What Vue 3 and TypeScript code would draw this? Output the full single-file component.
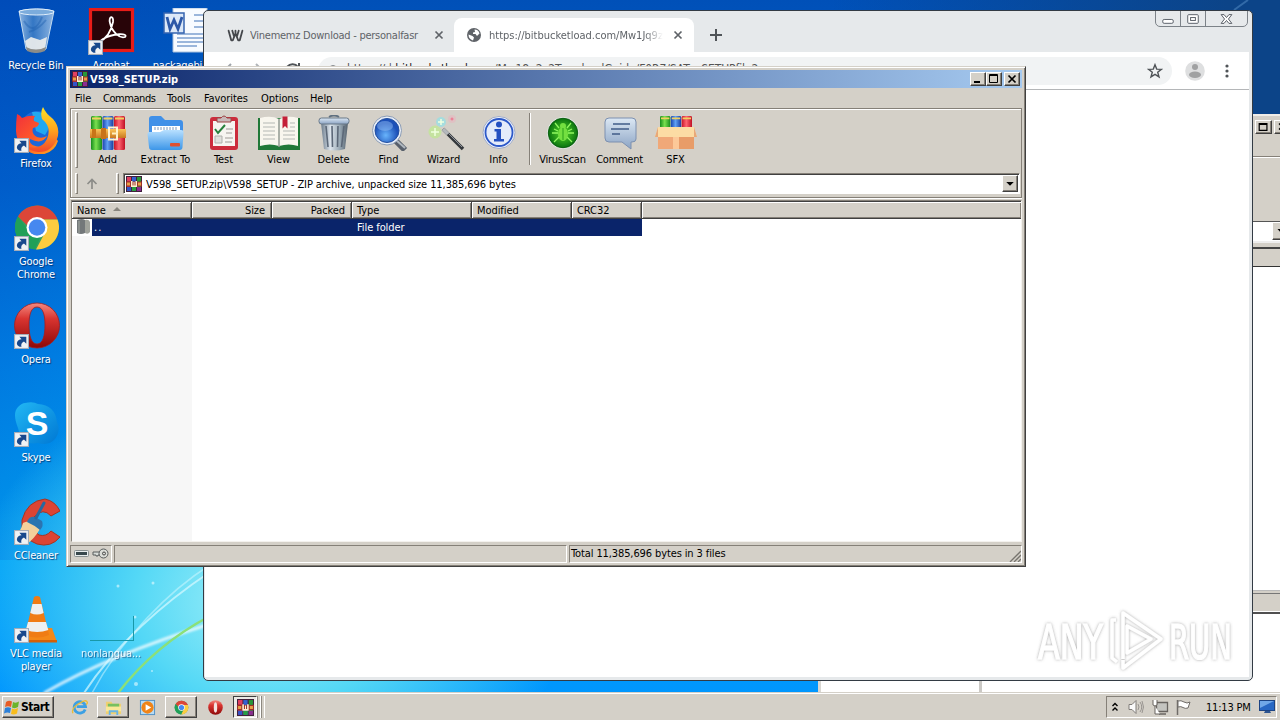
<script setup lang="ts">
interface Shortcut { icon: string; label: string; linked: boolean }
interface Tool { icon: string; label: string; width: string }

const columnOne: Shortcut[] = [
  { icon: 'bin', label: 'Recycle Bin', linked: false },
  { icon: 'firefox', label: 'Firefox', linked: true },
  { icon: 'chrome', label: 'Google Chrome', linked: true },
  { icon: 'opera', label: 'Opera', linked: true },
  { icon: 'skype', label: 'Skype', linked: true },
  { icon: 'ccleaner', label: 'CCleaner', linked: true },
  { icon: 'vlc', label: 'VLC media player', linked: true },
]
const menus: string[] = ['File', 'Commands', 'Tools', 'Favorites', 'Options', 'Help']
const tools: Tool[] = [
  { icon: 'add', label: 'Add', width: 'w55' },
  { icon: 'extract', label: 'Extract To', width: 'w61' },
  { icon: 'test', label: 'Test', width: 'w55' },
  { icon: 'view', label: 'View', width: 'w55' },
  { icon: 'delete', label: 'Delete', width: 'w55' },
  { icon: 'find', label: 'Find', width: 'w55' },
  { icon: 'wizard', label: 'Wizard', width: 'w55' },
  { icon: 'info', label: 'Info', width: 'w55' },
]
const extras: Tool[] = [
  { icon: 'virus', label: 'VirusScan', width: 'w57' },
  { icon: 'comment', label: 'Comment', width: 'w57' },
  { icon: 'sfx', label: 'SFX', width: 'w55' },
]
</script>

<template>
  <div class="desktop">
    <svg class="defs" width="0" height="0">
      <defs>
        <linearGradient id="gOrange" x1="0" y1="0" x2="0" y2="1"><stop offset="0" stop-color="#ffe226" /><stop offset=".5" stop-color="#ffa61c" /><stop offset="1" stop-color="#f4482c" /></linearGradient>
        <linearGradient id="gFox" x1="0" y1="0" x2="1" y2="1"><stop offset="0" stop-color="#f0303c" /><stop offset=".5" stop-color="#ff5a28" /><stop offset="1" stop-color="#ffb01c" /></linearGradient>
        <linearGradient id="gOpera" x1="0" y1="0" x2="0" y2="1"><stop offset="0" stop-color="#f48a80" /><stop offset=".35" stop-color="#d93430" /><stop offset="1" stop-color="#8c0808" /></linearGradient>
        <linearGradient id="gSky" x1="0" y1="0" x2="1" y2="1"><stop offset="0" stop-color="#22b8f4" /><stop offset="1" stop-color="#0078d4" /></linearGradient>
        <linearGradient id="gBin" x1="0" y1="0" x2="1" y2="0"><stop offset="0" stop-color="#a8c8e8" stop-opacity=".85" /><stop offset=".4" stop-color="#4a88c8" stop-opacity=".7" /><stop offset="1" stop-color="#b4d0ec" stop-opacity=".8" /></linearGradient>
        <linearGradient id="gFolder" x1="0" y1="0" x2="0" y2="1"><stop offset="0" stop-color="#b8e0ff" /><stop offset="1" stop-color="#3c96e8" /></linearGradient>
        <linearGradient id="gMetal" x1="0" y1="0" x2="1" y2="0"><stop offset="0" stop-color="#6c7c8c" /><stop offset=".35" stop-color="#dce4ec" /><stop offset=".7" stop-color="#98a8b4" /><stop offset="1" stop-color="#54606c" /></linearGradient>
        <linearGradient id="gSteel" x1="0" y1="0" x2="0" y2="1"><stop offset="0" stop-color="#dce8f4" /><stop offset="1" stop-color="#8ca4c4" /></linearGradient>
        <linearGradient id="gGreen" x1="0" y1="0" x2="1" y2="0"><stop offset="0" stop-color="#168c1c" /><stop offset=".45" stop-color="#7ae050" /><stop offset="1" stop-color="#168c1c" /></linearGradient>
        <linearGradient id="gBlue" x1="0" y1="0" x2="1" y2="0"><stop offset="0" stop-color="#1a44b0" /><stop offset=".45" stop-color="#60a0f4" /><stop offset="1" stop-color="#1a3ca0" /></linearGradient>
        <linearGradient id="gRed" x1="0" y1="0" x2="1" y2="0"><stop offset="0" stop-color="#c81428" /><stop offset=".45" stop-color="#ff6470" /><stop offset="1" stop-color="#c01024" /></linearGradient>
        <linearGradient id="gBelt" x1="0" y1="0" x2="0" y2="1"><stop offset="0" stop-color="#fcc458" /><stop offset="1" stop-color="#c87820" /></linearGradient>
        <radialGradient id="gLens" cx=".45" cy=".7"><stop offset="0" stop-color="#68b4fc" /><stop offset="1" stop-color="#1c50b8" /></radialGradient>
        <radialGradient id="gVirus"><stop offset="0" stop-color="#58d828" /><stop offset="1" stop-color="#0a7410" /></radialGradient>
        <symbol id="rar" viewBox="0 0 16 16">
          <rect width="16" height="16" fill="#40203c" />
          <path d="M1 1h4v14H1z" fill="#c82840" /><path d="M6 1h4v14H6z" fill="#3460d0" /><path d="M11 1h4v14h-4z" fill="#289838" />
          <path d="M1 1h4v4H1z" fill="#e04060" /><path d="M1 11h4v4H1z" fill="#3454c8" /><path d="M6 11h4v4H6z" fill="#28a040" /><path d="M11 11h4v4h-4z" fill="#8c2c90" />
          <path d="M0 5.5h16v5H0z" fill="#9c3028" /><path d="M1 6.5h3v3H1zM12 6.5h3v3h-3z" fill="#e8a048" />
          <path d="M5 5h1.5v4.5h1V6h1v3.500h1V5H11v6H5z" fill="#fff0d0" />
        </symbol>
        <symbol id="arrow" viewBox="0 0 14 14">
          <rect x=".5" y=".5" width="13" height="13" fill="#f0f2f4" stroke="#a4acb8" />
          <path d="M5 2.500h6.500V9L9.300 7C7 8 6.300 10 7 12 4.500 12 2.500 10.500 2.700 8.300 3 6 5 5 7 4.800z" fill="#18488c" />
        </symbol>
        <symbol id="chromeball" viewBox="0 0 48 48">
          <circle cx="24" cy="24" r="22" fill="#34a060" />
          <path d="M5 13A22 22 0 0 1 44.500 16H24a9 9 0 0 0-8.700 7z" fill="#dc4638" />
          <path d="M44.500 16A22 22 0 0 1 23 46l9-17a9 9 0 0 0-4-13z" fill="#fccc40" />
          <path d="M5 13l11 15a9 9 0 0 0 12 4l-6 14A22 22 0 0 1 5 13z" fill="#20a058" />
          <circle cx="24" cy="24" r="10.500" fill="#fff" /><circle cx="24" cy="24" r="8.300" fill="#4688f0" />
        </symbol>
        <symbol id="books" viewBox="0 0 34 34">
          <rect x="0" y="0" width="11" height="34" rx="1.500" fill="url(#gGreen)" />
          <rect x="11.500" y="0" width="11" height="34" rx="1.500" fill="url(#gBlue)" />
          <rect x="23" y="0" width="11" height="34" rx="1.500" fill="url(#gRed)" />
          <path d="M1 2.500h9M12.500 2.500h9M24 2.500h9" stroke="#f0d060" stroke-width="2" />
        </symbol>
      </defs>
    </svg>

    <svg class="wall" width="1280" height="693" viewBox="0 0 1280 693">
      <defs>
        <filter id="soft"><feGaussianBlur stdDeviation="1" /></filter>
      </defs>
      <g fill="none">
        <path d="M44 693Q110 655 210 624" stroke="#fff" stroke-width="3" opacity=".75" filter="url(#soft)" />
        <path d="M84 693C115 645 165 602 210 572" stroke="#d8faff" stroke-width="2" opacity=".7" />
        <path d="M92 693C120 640 170 590 210 565" stroke="#d8faff" stroke-width="1.500" opacity=".5" />
        <path d="M118 693Q155 645 210 616" stroke="#8ce078" stroke-width="2.500" />
      </g>
      <g fill="#e8fcff" opacity=".6"><circle cx="118" cy="586" r="1.500" /><circle cx="153" cy="583" r="1.500" /><circle cx="135" cy="617" r="1.500" /><circle cx="136" cy="684" r="2" /><circle cx="152" cy="671" r="1" /></g>
      <path d="M1234 10l14-10" stroke="#5890c8" stroke-width="2" opacity=".5" />
    </svg>

    <div class="shortcuts">
      <div v-for="s in columnOne" :key="s.label" class="shortcut">
        <div class="pic">
          <svg v-if="s.icon === 'bin'" viewBox="0 0 48 48">
            <path d="M7 3l7 38q10 6 20 0l8-38q-17-4-35 0z" fill="url(#gBin)" stroke="#c4dcf0" />
            <ellipse cx="24.500" cy="4" rx="17.500" ry="3" fill="#7cacdc" stroke="#e0eefa" />
            <path d="M13 33l6-4 9 3 7-3-2 12q-9 4-18 0z" fill="#f0f0ec" opacity=".9" />
            <path d="M14 39q10 5 20 0l-1 4q-9 4-18 0z" fill="#8c8c88" />
            <path d="M12 13q10 16 18-4M17 24q10-3 17-12" fill="none" stroke="#1c5cac" stroke-width="2" opacity=".4" />
          </svg>
          <svg v-else-if="s.icon === 'firefox'" viewBox="0 0 48 48">
            <circle cx="26" cy="23" r="18" fill="#1c68d8" /><path d="M20 6q12-2 16 7 3 8-3 16l-9-4z" fill="#20a8f0" />
            <path d="M5 8q3 1 5 4 7-3 13-2-2 3-1 5l5 2q0 4-6 5-2 6 4 9 5 2 10-1-5 9-17 3-2 7 11 8 13-5 12-12l5 6q-4 13-20 14Q5 44 4 25q0-10 1-17z" fill="url(#gFox)" />
            <path d="M31 1q3 7 10 12 8 9 4 20-6 14-19 13-9-1-12-6 15 5 21-7 5-12-5-20-2-7 1-12z" fill="url(#gOrange)" />
          </svg>
          <svg v-else-if="s.icon === 'chrome'" viewBox="0 0 48 48"><use href="#chromeball" x="1" y="-.5" /></svg>
          <svg v-else-if="s.icon === 'opera'" viewBox="0 0 48 48">
            <path fill-rule="evenodd" d="M25 1a22 22 0 1 1 0 45 22 22 0 0 1 0-45zm0 4c-6 0-8 8-8 18s2 19 8 19 8-9 8-19-2-18-8-18z" fill="url(#gOpera)" stroke="#a81c1c" stroke-width=".8" />
          </svg>
          <svg v-else-if="s.icon === 'skype'" viewBox="0 0 48 48">
            <path d="M13 3q8-2 13 1 17 1 19 18 4 9-2 17-6 7-17 4Q10 46 6 28 0 13 6 7q4-4 7-4z" fill="url(#gSky)" />
            <text x="25" y="35" class="skype-s">S</text>
          </svg>
          <svg v-else-if="s.icon === 'ccleaner'" viewBox="0 0 48 48">
            <path d="M48 13l-9 5Q31 9 22 19q-5 12 5 18 7 2 12-4l9 6q-9 11-23 7Q8 40 10 22 15 3 33 1q10 2 15 12z" fill="#dc4434" stroke="#a83420" />
            <path d="M11 25q8-5 17 6-6 10-13 15L2 40q7-7 9-15z" fill="#f4d09c" />
            <path d="M15 24q2-6 8-5l7 4q2 5-2 9-6-5-13-8z" fill="#2c74b0" /><path d="M24 20l8-15" stroke="#2868a0" stroke-width="3" stroke-linecap="round" />
          </svg>
          <svg v-else viewBox="0 0 48 48">
            <path d="M10 32h30l5 14H8z" fill="#f48818" /><path d="M8 44h37v2.500H8z" fill="#d46008" />
            <path d="M22 1q3-2 6 0l9 38q-12 5-24 0z" fill="#f07c14" />
            <path d="M20.400 8h9.200l2 9q-6.500 3-13.300 0zM16 26h18l2.300 8q-11 4-22.500 0z" fill="#eef0f0" />
          </svg>
          <svg v-if="s.linked" class="link" viewBox="0 0 14 14"><use href="#arrow" /></svg>
        </div>
        <div class="caption">{{ s.label }}</div>
      </div>
    </div>

    <div class="shortcuts second">
      <div class="shortcut">
        <div class="pic">
          <svg viewBox="0 0 48 48"><rect x="3.500" y="1.500" width="42" height="41" fill="#280408" stroke="#e81c18" stroke-width="3.200" />
            <path d="M12 34q11-5 14-20c1-7-5-6-3 1 2 9 10 16 15 14 4-4-12-4-22 2-7 5-5 7-2 3z" fill="none" stroke="#fff" stroke-width="1.800" /></svg>
          <svg class="link acro" viewBox="0 0 14 14"><use href="#arrow" /></svg>
        </div>
        <div class="caption">Acrobat</div>
      </div>
      <div class="shortcut">
        <div class="pic">
          <svg viewBox="0 0 48 48"><path d="M12 0h34v44H12z" fill="#f8fbff" stroke="#a8c0dc" />
            <path d="M33 7h9M33 13h9M33 19h9M16 26h26M16 30h26M16 34h26M16 38h20" stroke="#7ca0d0" stroke-width="1.500" />
            <rect x="3" y="5" width="20" height="20" fill="#dce8f8" stroke="#3464b0" stroke-width="1.500" />
            <path d="M6 9l3 12 4-9 4 9 4-12" stroke="#2c58a8" stroke-width="2.800" fill="none" /></svg>
        </div>
        <div class="caption wide-caption">packagebin...</div>
      </div>
    </div>

    <div class="ghost">
      <div class="ghost-edge"></div>
      <div class="caption">nonlangua...</div>
    </div>

    <div class="lower-window"><span></span></div>

    <div class="back-window">
      <div class="bw-title"><i class="btn3"><svg viewBox="0 0 16 14"><path d="M3 3h9v8H3zM3 4h9" fill="none" stroke="#000" stroke-width="1.400" /></svg></i><i class="btn3"><svg viewBox="0 0 16 14"><path d="M4 3l7 7M11 3l-7 7" stroke="#000" stroke-width="1.700" /></svg></i></div>
      <div class="bw-menu"></div>
      <div class="bw-tools"></div>
      <div class="bw-addr"><i class="btn3"><svg viewBox="0 0 14 16"><path d="M4 6h7l-3.500 4z" /></svg></i></div>
      <div class="bw-head"></div>
      <div class="bw-body"></div>
      <div class="bw-status"></div>
    </div>

    <div class="browser">
      <div class="tabs">
        <div class="tab">
          <svg class="fav" viewBox="0 0 16 16"><path d="M1.500 3.500l2.500 9h1.500L8 6l2.500 6.500H12l2.500-9M5 3.500l1.500 5M8 5.500V3.500M11 3.500l-1.500 5" fill="none" stroke="#45484c" stroke-width="1.700" stroke-linejoin="round" stroke-linecap="round" /></svg>
          <span class="tab-title first">Vinememz Download - personalfasr</span>
          <svg class="x" viewBox="0 0 10 10"><path d="M1.500 1.500l7 7M8.500 1.500l-7 7" stroke="#5f6368" stroke-width="1.700" /></svg>
        </div>
        <div class="tab active">
          <svg class="fav" viewBox="0 0 16 16"><circle cx="8" cy="8" r="7" fill="#5f6368" /><path d="M2.500 7.500l4 1.500 1.500 1.500-1 3Q2.500 12 2.500 7.500zM8.500 2.500q4 0 5 4L11 9 9.500 7H7V5.500l2-.5z" fill="#fff" /></svg>
          <span class="tab-title second-title">https://bitbucketload.com/Mw1Jq9z</span>
          <svg class="x" viewBox="0 0 10 10"><path d="M1.500 1.500l7 7M8.500 1.500l-7 7" stroke="#5f6368" stroke-width="1.700" /></svg>
        </div>
        <svg class="plus" viewBox="0 0 14 14"><path d="M7 1v12M1 7h12" stroke="#505458" stroke-width="2" /></svg>
      </div>
      <div class="wbtns">
        <i><svg viewBox="0 0 25 16"><rect x="7" y="8.500" width="11" height="4" rx="1.500" /></svg></i>
        <i><svg viewBox="0 0 25 16"><rect x="7" y="3.500" width="11" height="9" rx="1" /><rect x="10" y="6.500" width="5" height="3" /></svg></i>
        <i class="wide"><svg viewBox="0 0 42 16"><path d="M15.500 3.500h3l2.500 3 2.500-3h3l-3.500 4.500 3.500 4.500h-3L21 9.500l-2.500 3h-3L19 8z" /></svg></i>
      </div>
      <div class="nav">
        <svg class="arrows" viewBox="0 0 110 32"><path d="M27 9l-7 7 7 7M20 16h14" stroke="#a0a5aa" fill="none" stroke-width="2" /><path d="M52 9l7 7-7 7M45 16h14" stroke="#b0b4b8" fill="none" stroke-width="2" /><path d="M94 12a7 7 0 1 0 1 7M95 8v5h-5" stroke="#505458" fill="none" stroke-width="2" /></svg>
        <div class="omni"><svg viewBox="0 0 14 14"><circle cx="7" cy="7" r="5" fill="none" stroke="#5f6368" stroke-width="1.400" /></svg><span>https:// | <b>bitbucketload.com</b>/Mw18q2z2TownloadGuide/F0R7/SAT-wSETUPfile2</span>
          <svg class="star" viewBox="0 0 16 16"><path d="M8 1.700l1.700 4.400 4.700.2-3.700 3 1.300 4.600-4-2.600-4 2.600 1.300-4.600-3.700-3 4.700-.2z" fill="none" stroke="#505458" stroke-width="1.400" /></svg></div>
        <svg class="avatar" viewBox="0 0 20 20"><circle cx="10" cy="10" r="9.800" fill="#dedfe0" /><circle cx="10" cy="6" r="3" fill="#a0a1a2" /><ellipse cx="10" cy="13.700" rx="6" ry="3.200" fill="#a0a1a2" /></svg>
        <svg class="dots" viewBox="0 0 4 14"><circle cx="2" cy="2" r="1.600" /><circle cx="2" cy="7" r="1.600" /><circle cx="2" cy="12" r="1.600" /></svg>
      </div>
      <div class="page"></div>
    </div>

    <div class="archiver">
      <div class="title">
        <svg class="rar" viewBox="0 0 16 16"><use href="#rar" /></svg><span>V598_SETUP.zip</span>
        <div class="title-btns">
          <i class="btn3"><svg viewBox="0 0 14 12"><path d="M3 9h6" stroke="#000" stroke-width="2" /></svg></i>
          <i class="btn3"><svg viewBox="0 0 14 12"><path d="M2.500 1.500h8v8h-8zM2.500 2.500h8" fill="none" stroke="#000" /></svg></i>
          <i class="btn3 gap"><svg viewBox="0 0 14 12"><path d="M3.500 2.500l7 7M10.500 2.500l-7 7" stroke="#000" stroke-width="1.700" /></svg></i>
        </div>
      </div>
      <div class="menu"><span v-for="m in menus" :key="m" :class="'m-' + m.toLowerCase()">{{ m }}</span></div>
      <div class="bars">
        <div class="tools">
          <i class="grip"></i>
          <div v-for="t in tools" :key="t.icon" class="tool" :class="t.width">
            <svg v-if="t.icon === 'add'" viewBox="0 0 42 36"><use href="#books" x="4" y="1" width="34" height="34" /><path d="M3 14h36v9H3z" fill="url(#gBelt)" /><path d="M5 14h4v9H5zM14 13h5v11h-5z" fill="#c87418" /><rect x="22" y="12.500" width="8" height="12" fill="none" stroke="#fff4d0" stroke-width="2" /><path d="M25 18.500h6" stroke="#fff0c0" stroke-width="2" /></svg>
            <svg v-else-if="t.icon === 'extract'" viewBox="0 0 42 36"><path d="M4 4q0-3 3-3h9l4 4h15q3 0 3 3v18H4z" fill="#4090e8" /><path d="M7 11h28v10H7z" fill="#fff" /><path d="M10 12v3M13 12v3M16 12v3M19 12v3M22 12v3M25 12v3M28 12v3M31 12v3" stroke="#7c98bc" /><path d="M2.500 19q0-2 2-2H15l4-2h17q3 0 2.500 3l-1 14q0 3-3 3H7q-3 0-3-3z" fill="url(#gFolder)" /><rect x="25" y="28" width="10" height="3.500" rx="1" fill="#e05030" /></svg>
            <svg v-else-if="t.icon === 'test'" viewBox="0 0 42 36"><rect x="7" y="2" width="28" height="33" rx="3" fill="#cc2c3c" /><path d="M10 6h22v25H10z" fill="#f6f4f0" /><path d="M14 3h4q3-4 6 0h4v4H14z" fill="#c8b8b8" stroke="#944" /><path d="M12 14l3 4 7-8" fill="none" stroke="#28803c" stroke-width="2" /><path d="M23 14h7M23 18h6M22 23h8M22 27h7" stroke="#bcb8b4" stroke-width="1.500" /><path d="M12 21h7v7h-7z" fill="#e0e0dc" stroke="#b0b0ac" /></svg>
            <svg v-else-if="t.icon === 'view'" viewBox="0 0 42 36"><path d="M0 3h42v32H0z" fill="#207838" /><path d="M2 3q11-3 19 1v27q-9-3-19 0zM40 3q-10-3-19 1v27q10-3 19 0z" fill="#f8f6ee" /><path d="M5 8h12M5 12h12M5 16h12M5 20h12M5 24h12M25 16h12M25 20h12M25 24h12M32 8h5M32 12h5" stroke="#b4b8b4" stroke-width="1.200" /><path d="M21 4v28" stroke="#909890" stroke-width="1.500" /><path d="M24.500 1.500h5v12L27 11l-2.500 2.500z" fill="#c42038" /></svg>
            <svg v-else-if="t.icon === 'delete'" viewBox="0 0 42 36"><path d="M16 2q5-3 10 0" fill="none" stroke="#607080" stroke-width="2" /><path d="M8 8h27l-3 26q-11 3-21 0z" fill="url(#gMetal)" /><path d="M13 11l2 21M19 11l.5 21M25 11l-.5 21M31 11l-2.500 21" stroke="#5c6878" stroke-width="1.600" /><rect x="6" y="3" width="30" height="6" rx="2.500" fill="url(#gSteel)" stroke="#687888" /></svg>
            <svg v-else-if="t.icon === 'find'" viewBox="0 0 42 36"><path d="M27 25l10 10" stroke="#58606c" stroke-width="6" /><path d="M28 25l9 8" stroke="#b0b8c0" stroke-width="2" /><circle cx="19" cy="15.500" r="14.500" fill="#e8eef8" stroke="#8c9cb4" /><circle cx="19" cy="15.500" r="12" fill="url(#gLens)" stroke="#2450a0" /><ellipse cx="17" cy="11" rx="8" ry="5" fill="#90bcf4" opacity=".5" /></svg>
            <svg v-else-if="t.icon === 'wizard'" viewBox="0 0 42 36"><circle cx="12" cy="17" r="6.500" fill="#b8f080" opacity=".55" /><circle cx="18" cy="7" r="5" fill="#80e8f0" opacity=".55" /><circle cx="29" cy="4" r="4" fill="#f8a0b8" opacity=".3" /><path d="M12 13v8M8 17h8M18 4v6M15 7h6" stroke="#f0ffe0" stroke-width="1.500" /><path d="M29 2.500v3M27.500 4h3" stroke="#f06c88" /><path d="M20 14l20 20" stroke="#34383c" stroke-width="3.500" /><path d="M20 14l5 5" stroke="#b4b8bc" stroke-width="3.500" /><path d="M25 18l14 14" stroke="#90949c" /></svg>
            <svg v-else viewBox="0 0 42 36"><circle cx="21" cy="17.500" r="16" fill="#eef2fc" stroke="#a0acc8" /><circle cx="21" cy="17.500" r="13.500" fill="#e4ebfa" stroke="#2c58c8" stroke-width="1.800" /><circle cx="21" cy="9.500" r="3" fill="#2450c0" /><path d="M16.500 14H23v10h3v2.500H16V24h2.500v-7.500h-2z" fill="#2450c0" /></svg>
            <span>{{ t.label }}</span>
          </div>
          <i class="divider"></i>
          <div v-for="t in extras" :key="t.icon" class="tool" :class="t.width">
            <svg v-if="t.icon === 'virus'" viewBox="0 0 42 36"><circle cx="21" cy="18" r="16" fill="#e0e4e0" /><circle cx="21" cy="18" r="14.700" fill="url(#gVirus)" stroke="#0c6010" /><g stroke="#90f860" stroke-width="1.300" fill="none"><path d="M13 8l4 5M29 8l-4 5M10 18h6M26 18h6M12 27l5-5M30 27l-5-5M12 14l4 2M30 14l-4 2" /></g><ellipse cx="21" cy="19" rx="5" ry="7" fill="#74e040" /><circle cx="21" cy="11" r="3" fill="#74e040" /><path d="M21 13v12" stroke="#28a018" /></svg>
            <svg v-else-if="t.icon === 'comment'" viewBox="0 0 42 36"><path d="M10 3h23q4 0 4 4v17q0 3-4 3h-1v7l-9-7H10q-4 0-4-4V7q0-4 4-4z" fill="url(#gSteel)" stroke="#7c90b0" /><path d="M14 9h17M12 14h18M13 19h8" stroke="#405c88" stroke-width="1.600" /></svg>
            <svg v-else viewBox="0 0 42 36"><use href="#books" x="5" y="1" width="32" height="32" /><path d="M3 13h36v21H3z" fill="#f0a878" /><path d="M21 22h18v12H21z" fill="#e89c68" /><path d="M3 12h36l3 10H0z" fill="#fcdca4" /><path d="M3 12L0 22h3zM39 12l3 10h-3z" fill="#e8a878" /><path d="M18 22h6v12h-6z" fill="#fcc898" /></svg>
            <span>{{ t.label }}</span>
          </div>
        </div>
        <div class="address">
          <i class="grip"></i>
          <svg class="up" viewBox="0 0 12 12"><path d="M6 11V1.500M1.500 6L6 1.500 10.500 6" fill="none" stroke="#8c8c88" stroke-width="1.700" /></svg>
          <i class="grip"></i>
          <div class="field"><svg class="rar" viewBox="0 0 16 16"><use href="#rar" /></svg><span>V598_SETUP.zip\V598_SETUP - ZIP archive, unpacked size 11,385,696 bytes</span><i class="btn3 drop"><svg viewBox="0 0 12 14"><path d="M2.500 5.500h7L6 9z" /></svg></i></div>
        </div>
      </div>
      <div class="list">
        <div class="row head">
          <span class="c120">Name <svg viewBox="0 0 8 4"><path d="M0 4l4-4 4 4z" fill="#88857e" /></svg></span><span class="c80 right">Size</span><span class="c80 right">Packed</span><span class="c120">Type</span><span class="c100">Modified</span><span class="c70">CRC32</span><span class="rest"></span>
        </div>
        <div class="entry">
          <svg viewBox="0 0 16 16"><path d="M1 1q5-2 8 0v13q-4 2-8 0z" fill="#73787a" /><path d="M9 1q4-1 5 2v10q-2 3-5 1z" fill="#a0a39c" /><path d="M3 2v12" stroke="#a4a8a0" /></svg>
          <div class="selected"><span class="dotdot">..</span><span class="kind">File folder</span></div>
        </div>
        <div class="name-col"></div>
      </div>
      <div class="status">
        <div class="cell s1"><svg viewBox="0 0 38 16"><rect x="2.500" y="4.500" width="14" height="6" rx="1" fill="#e8ecec" stroke="#889090" /><path d="M4 6h11v3H4z" fill="#38484c" /><path d="M21 6h7v3h-2v1h-2v-1h-3z" fill="#d8dcd8" stroke="#585c5c" /><circle cx="31.500" cy="7.500" r="4.500" fill="#dadcd8" stroke="#585c5c" /><circle cx="32" cy="7.500" r="1.500" fill="none" stroke="#444" /></svg></div>
        <div class="cell s2"></div>
        <div class="cell s3">Total 11,385,696 bytes in 3 files<svg viewBox="0 0 12 12"><path d="M1 12L12 1M5 12l7-7M9 12l3-3" stroke="#77746e" stroke-width="1.300" /></svg></div>
      </div>
    </div>

    <svg class="brand" viewBox="0 0 230 70">
      <defs><filter id="halo" x="-10%" y="-10%" width="120%" height="120%"><feDropShadow dx="0" dy="0" stdDeviation="1.700" flood-color="#666" flood-opacity=".6" /></filter></defs>
      <g filter="url(#halo)">
        <text x="8" y="54" textLength="65" lengthAdjust="spacingAndGlyphs">ANY</text>
        <text x="139" y="54" textLength="63" lengthAdjust="spacingAndGlyphs">RUN</text>
        <g fill="none" stroke="#fff" stroke-width="3.500" stroke-linejoin="round"><path d="M93 54V8l38 26-38 29v-8" /><path d="M97 21v27l24-14z" /><path d="M86 15h-4v38l5 4" /></g>
      </g>
    </svg>

    <div class="taskbar">
      <div class="start"><svg viewBox="0 0 16 16"><path d="M2 3q3-2 6-.5L7 8Q4 6.500 1 8z" fill="#e85c24" /><path d="M9 3q3 1.500 6-.5L14 8q-3 2-6 .5z" fill="#6cb42c" /><path d="M1 9q3-1.500 6 0l-1 5q-3-1-6 .5z" fill="#2c80d8" /><path d="M8 9.500q3 1.500 6-.5l-1 5.500Q10 16 7 15z" fill="#f8bc1c" /></svg><b>Start</b></div>
      <div class="quick">
        <span class="q ie"><svg viewBox="0 0 18 18"><path d="M15 11a6 6 0 1 1 .3-3H6" fill="none" stroke="#3ca0e4" stroke-width="3" /><path d="M2 15Q0 10 8 5t9-2q1 1-1 3" fill="none" stroke="#e8bc38" stroke-width="1.400" /></svg></span>
        <span class="q raised"><svg viewBox="0 0 18 18"><path d="M1 3h6l1 2h9v11H1z" fill="#f0d070" /><path d="M3 5h12v5H3z" fill="#78c060" /><path d="M1 8h16v5H1z" fill="#fae898" /><path d="M4 17v-5h10v5h-2v-3H6v3z" fill="#68b4e4" /></svg></span>
        <span class="q wmp"><svg viewBox="0 0 18 18"><rect x="1.500" y="1.500" width="15" height="15" fill="#b8dcf4" stroke="#5090c4" /><circle cx="9" cy="9" r="6.500" fill="#f08418" /><path d="M7 5.500l6 3.500-6 3.500z" fill="#fff" /></svg></span>
        <span class="q raised"><svg class="small" viewBox="0 0 48 48"><use href="#chromeball" /></svg></span>
        <span class="q op"><svg viewBox="0 0 18 18"><circle cx="9" cy="9" r="7.700" fill="url(#gOpera)" /><ellipse cx="9" cy="9" rx="1.800" ry="5.500" fill="#f4e4e0" /></svg></span>
        <span class="q pressed"><svg viewBox="0 0 16 16"><use href="#rar" /></svg></span><i class="stack"></i><i class="stack"></i>
      </div>
      <div class="tray">
        <svg class="chev" viewBox="0 0 8 10"><path d="M1.500 4L4 1.500 6.500 4M1.500 8.500L4 6l2.500 2.500" fill="none" stroke="#000" stroke-width="1.400" /></svg>
        <svg class="t1" viewBox="0 0 18 16"><path d="M2 5.500h3l4-4v13l-4-4H2z" fill="#fafafa" stroke="#807c78" /><path d="M11 5q2 3 0 6M13 3q3.500 5 0 10M15 2q3 6 0 12" fill="none" stroke="#989490" /></svg>
        <svg class="t1" viewBox="0 0 18 16"><path d="M5.500 3.500h11v9h-11zM8 15h7" fill="#c4c4c0" stroke="#686460" stroke-width="1.300" /><path d="M2 1v5q2 2 4 0V1M4 7v8h5" fill="#fff" stroke="#686460" /></svg>
        <svg class="t1" viewBox="0 0 18 16"><path d="M2.500 1v15" stroke="#706c68" stroke-width="1.500" /><path d="M3 2q3-1 6 1t6 0l-2 6q-3 1-5-.500T3 8z" fill="#fff" stroke="#706c68" /></svg>
        <span>11:13 PM</span>
        <svg class="monitor" viewBox="0 0 16 14"><rect x=".5" y=".5" width="15" height="10" fill="#2868c4" stroke="#1c4484" /><path d="M1 1h14L1 8z" fill="#70a8e8" /><path d="M6 11h5l1 2H5z" fill="#2c5490" /></svg>
      </div>
    </div>
  </div>
</template>

<style>
body { margin: 0; overflow: hidden; }
</style>

<style scoped>
* { box-sizing: border-box; }
.desktop { position: relative; width: 1280px; height: 720px; overflow: hidden; font: 11px/13px "DejaVu Sans Condensed", "DejaVu Sans", sans-serif; font-stretch: condensed; letter-spacing: -.08px; color: #000; white-space: nowrap;
  background: radial-gradient(ellipse 300px 230px at 270px 600px, #a8f2f8 0, #54d8f6 45%, rgba(30, 190, 248, 0) 100%), linear-gradient(90deg, rgba(0,60,190,.2) 0, rgba(0,160,255,0) 16%, transparent 65%, #0c4488 96%) 0 0 / 1280px 560px no-repeat, linear-gradient(180deg, #0050b8 0, #0064cc 25%, #0088e8 50%, #00a4f4 72%, #0094ff 100%); }
svg { display: block; flex: none; }
.defs, .wall { position: absolute; left: 0; top: 0; }
.shortcuts { position: absolute; left: 0; top: 8px; display: grid; grid-template-columns: 72px; grid-auto-rows: 98px; }
.shortcuts.second { left: 75px; grid-template-columns: 72px 72px; column-gap: 2px; }
.shortcut { display: flex; flex-direction: column; align-items: center; }
.pic { position: relative; width: 48px; height: 48px; }
.pic > svg { width: 48px; height: 48px; }
.pic > .link { position: absolute; width: 15px; height: 15px; left: 2px; bottom: 1px; }
.pic > .acro { left: 1px; }
.skype-s { font: bold 34px Arial, "Liberation Sans", sans-serif; fill: #fff; text-anchor: middle; }
.caption { margin-top: 3px; color: #fff; text-align: center; text-shadow: 1px 1px 1px rgba(0, 30, 80, .7); white-space: normal; width: 64px; letter-spacing: -.15px; }
.wide-caption { width: 72px; white-space: nowrap; }
.ghost { position: absolute; left: 79px; top: 616px; width: 64px; }
.ghost-edge { width: 44px; height: 25px; margin-left: 11px; border-right: 1px solid #1898a8; border-bottom: 1px solid #1898a8; }
.ghost .caption { margin-top: 6px; opacity: .85; }
.lower-window { position: absolute; left: 818px; top: 614px; width: 462px; height: 80px; background: #fff; border-left: 3px solid #d9d7d2; padding-left: 158px; }
.lower-window span { display: block; width: 3px; height: 78px; background: #cbc9c5; }
.back-window { position: absolute; left: 1200px; top: 114px; width: 120px; height: 500px; background: #d4d0c8; border-top: 2px solid #f0ede8; border-bottom: 2px solid #505050; display: flex; flex-direction: column; }
.bw-title { height: 40px; padding: 4px 0 0 55px; display: flex; gap: 2px; }
.bw-title .btn3 { width: 17px; height: 14px; }
.bw-menu { height: 1px; background: #858078; }
.bw-tools { height: 65px; border-top: 1px solid #fff; border-bottom: 1px solid #555; }
.bw-addr { height: 19px; background: #fff; padding-left: 72px; }
.bw-addr .btn3 { width: 17px; height: 18px; }
.bw-head { height: 26px; border-top: 2px solid #eee; border-bottom: 1px solid #333; background: linear-gradient(#d4d0c8 4px, #444 4px, #444 6px, #d4d0c8 6px); }
.bw-body { flex: 1; background: #fff; }
.bw-status { height: 22px; border-top: 1px solid #bbb; border-bottom: 1px solid #fff; background: linear-gradient(#d4d0c8 2px, #777 2px, #777 3px, #d4d0c8 3px); }
.btn3 { display: block; flex: none; background: #d4d0c8; border: 1px solid; border-color: #fff #404040 #404040 #fff; box-shadow: inset -1px -1px #858078; }
.btn3 svg { width: 100%; height: 100%; }

.browser { position: absolute; left: 203px; top: 10px; width: 1050px; height: 671px; background: #e6e9eb; border: 1px solid #333b44; border-radius: 5px; overflow: hidden; display: flex; flex-direction: column; }
.tabs { height: 41px; flex: none; display: flex; align-items: flex-end; padding-left: 10px; }
.tab { width: 240px; height: 34px; border-radius: 8px 8px 0 0; display: flex; align-items: center; padding-left: 13px; }
.tab.active { background: #fff; padding-left: 12px; }
.fav { width: 16px; height: 16px; }
.tab:first-child .fav { width: 17px; height: 17px; }
.tab-title { width: 174px; margin-left: 7px; color: #5f6368; font-size: 11px; overflow: hidden; height: 16px; line-height: 17px; }
.first { letter-spacing: -.25px; width: 177px; margin-left: 6px; }
.second-title { letter-spacing: 0; mask-image: linear-gradient(90deg, #000 155px, transparent 174px); }
.x { width: 10px; height: 10px; margin-left: 10px; }
.tab:first-child .x { margin-left: 7px; }
.plus { width: 14px; height: 14px; margin: 0 0 10px 15px; }
.wbtns { position: absolute; right: 4px; top: -1px; display: flex; border: 1px solid #7c8288; border-radius: 0 0 5px 5px; height: 17px; }
.wbtns i { width: 25px; border-right: 1px solid #7c8288; }
.wbtns .wide { width: 41px; border: 0; }
.wbtns svg { width: 100%; height: 16px; fill: #fff; stroke: #585e66; }
.nav { height: 38px; flex: none; margin-right: 3px; background: #fff; display: flex; align-items: center; border-bottom: 1px solid #b4b6b8; }
.arrows { width: 110px; height: 32px; }
.omni { width: 854px; flex: none; height: 28px; border-radius: 14px; background: #f1f3f4; display: flex; align-items: center; padding-left: 8px; gap: 7px; font-size: 12px; color: #555; margin-left: 4px; }
.omni > svg { width: 14px; height: 14px; }
.omni span { width: 793px; flex: none; padding-bottom: 2px; }
.omni b { color: #222; font-weight: normal; }
.omni .star { width: 16px; height: 16px; }
.avatar { width: 20px; height: 20px; margin-left: 13px; }
.dots { width: 4px; height: 14px; margin-left: 20px; fill: #505458; }
.page { flex: 1; background: #fff; margin: 0 3px 3px 1px; }

.archiver { position: absolute; left: 66px; top: 66px; width: 960px; height: 501px; background: #d4d0c8; border: 1px solid; border-color: #d4d0c8 #404040 #404040 #d4d0c8; box-shadow: inset 1px 1px #fff, inset -1px -1px #858078; padding: 3px; display: flex; flex-direction: column; }
.title { height: 18px; flex: none; display: flex; align-items: center; padding-left: 2px; background: linear-gradient(90deg, #0a246a, #a6caf0); color: #fff; font-weight: bold; }
.title > span { margin-left: 2px; letter-spacing: .08px; }
.rar { width: 16px; height: 16px; }
.title-btns { margin-left: auto; display: flex; padding-right: 2px; }
.title-btns .btn3 { width: 16px; height: 14px; }
.title-btns .gap { margin-left: 2px; }
.menu { height: 20px; flex: none; display: flex; align-items: center; padding-left: 5px; }
.menu span { flex: none; }
.m-file { width: 28px; } .m-commands { width: 64px; letter-spacing: -.45px; } .m-tools { width: 37px; } .m-favorites { width: 57px; } .m-options { width: 49px; }
.bars { height: 90px; flex: none; border: 1px solid #858078; box-shadow: inset 1px 1px #fff, 0 1px #fff; padding: 3px 4px 0; }
.tools { height: 60px; display: flex; align-items: flex-start; }
.grip { display: block; flex: none; width: 3px; height: 56px; border: 1px solid; border-color: #fff #858078 #858078 #fff; }
.grip + .tool { margin-left: 2px; }
.tool { display: flex; flex-direction: column; align-items: center; flex: none; padding-top: 3px; }
.tool svg { width: 42px; height: 36px; }
.tool span { margin-top: 2px; }
.w55 { width: 55px; } .w57 { width: 57px; letter-spacing: -.28px; } .w61 { width: 61px; letter-spacing: .1px; }
.divider { width: 2px; height: 52px; margin: 1px 3px 0 3px; border-left: 1px solid #858078; border-right: 1px solid #fff; }
.address { display: flex; align-items: center; height: 23px; }
.address .grip { height: 21px; }
.up { width: 12px; height: 12px; margin: 0 18px 0 8px; }
.field { flex: 1; height: 21px; margin-left: 4px; margin-right: -3px; display: flex; align-items: center; background: #fff; border: 1px solid; border-color: #858078 #fff #fff #858078; box-shadow: inset 1px 1px #404040; padding-left: 2px; }
.field > span { margin: 2px 0 0 4px; letter-spacing: -.08px; }
.drop { width: 16px; height: 17px; margin-left: auto; margin-right: 1px; }
.list { height: 342px; flex: none; margin: 2px 0 0 1px; background: #fff; border: 1px solid; border-color: #858078 #f4f2ee #f4f2ee #858078; box-shadow: inset 0 1px #404040; padding-top: 1px; display: flex; flex-direction: column; }
.head { height: 17px; flex: none; display: flex; background: #d4d0c8; }
.head span { border-right: 1px solid #404040; border-bottom: 1px solid #404040; box-shadow: inset 1px 1px #fff, inset -1px -1px #858078; padding: 3px 6px 0 5px; line-height: 12px; }
.head .rest { flex: 1; border-right: 0; }
.head svg { display: inline; width: 8px; height: 4px; margin: 0 0 3px 4px; }
.right { text-align: right; }
.c120 { width: 120px; } .c100 { width: 100px; } .c80 { width: 80px; } .c70 { width: 70px; }
.entry { height: 17px; flex: none; display: flex; padding-left: 4px; }
.entry svg { width: 16px; height: 16px; }
.selected { width: 550px; background: #0a246a; color: #fff; display: flex; line-height: 18px; padding-left: 2px; }
.dotdot { width: 263px; letter-spacing: 1px; }
.name-col { width: 120px; flex: 1; background: #f7f7f7; }
.status { height: 18px; flex: none; margin: 3px 0 0 0; display: flex; gap: 2px; }
.cell { border: 1px solid; border-color: #858078 #fff #fff #858078; }
.s1 { width: 42px; padding-left: 1px; } .s2 { width: 453px; } .s3 { flex: 1; padding-left: 1px; line-height: 16px; display: flex; justify-content: space-between; align-items: flex-end; letter-spacing: -.11px; }
.s1 svg { width: 38px; height: 16px; } .s3 svg { width: 12px; height: 12px; }
.brand { position: absolute; left: 1030px; top: 605px; width: 230px; height: 70px; }
.brand text { font: 48px "DejaVu Sans Condensed", "Liberation Sans", sans-serif; letter-spacing: 0; fill: #fff; stroke: #fff; stroke-width: 1.2px; }

.taskbar { position: absolute; left: 0; top: 692px; width: 1280px; height: 28px; background: #d4d0c8; box-shadow: inset 0 1px #d4d0c8, inset 0 2px #fff; display: flex; padding: 4px 3px 2px 2px; }
.start { width: 52px; height: 22px; border: 1px solid; border-color: #fff #404040 #404040 #fff; box-shadow: inset -1px -1px #858078; display: flex; align-items: center; padding-left: 1px; gap: 1px; font-size: 12px; letter-spacing: -.5px; }
.start svg { width: 16px; height: 16px; }
.quick { display: flex; align-items: center; margin-left: 16px; height: 22px; }
.q { height: 22px; display: flex; align-items: center; justify-content: center; }
.q svg { width: 17px; height: 17px; }
.q .small { width: 15px; height: 15px; }
.ie { width: 19px; margin-right: 8px; }
.raised { width: 32px; border: 1px solid; border-color: #fff #404040 #404040 #fff; box-shadow: inset -1px -1px #858078; }
.wmp { width: 36px; } .op { width: 36px; }
.pressed { width: 24px; border: 1px solid; border-color: #404040 #fff #fff #404040; background: #eceae6; }
.stack { width: 4px; height: 22px; border-left: 1px solid #8c8880; border-right: 1px solid #fff; }
.tray { margin-left: auto; width: 171px; height: 22px; border: 1px solid; border-color: #858078 #fff #fff #858078; display: flex; align-items: center; padding-left: 4px; }
.chev { width: 8px; height: 10px; }
.t1 { width: 18px; height: 16px; margin-left: 8px; }
.tray .t1 + .t1 { margin-left: 6px; }
.tray span { margin-left: 13px; width: 53px; letter-spacing: -.2px; }
.monitor { width: 16px; height: 14px; }
</style>
